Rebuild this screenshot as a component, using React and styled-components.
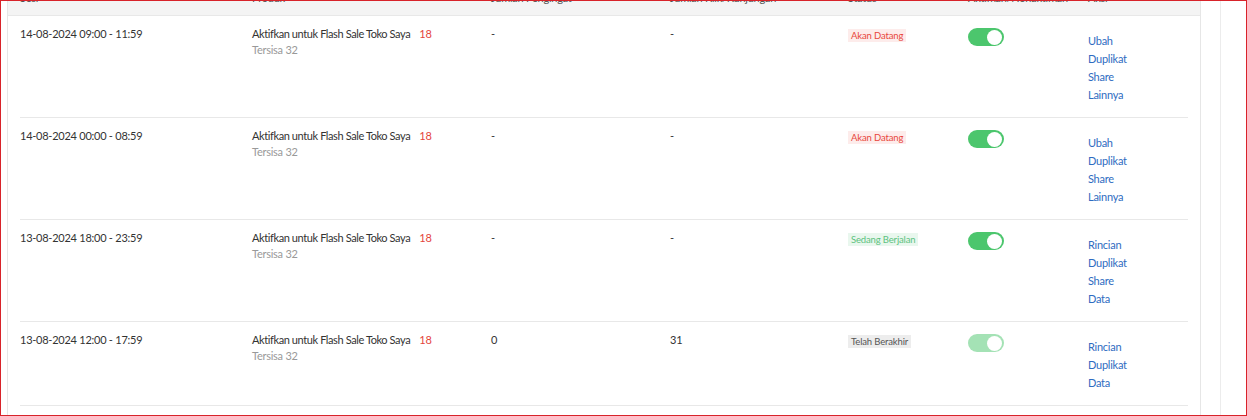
import React from "react";
import styled, { createGlobalStyle } from "styled-components";

const GlobalStyle = createGlobalStyle`
	html, body {
		margin: 0;
		padding: 0;
		background: #fff;
	}
	body {
		font-family: Lato, "Open Sans", sans-serif;
		color: #333;
		letter-spacing: -0.25px;
	}
`;

const columns = ["Sesi", "Produk", "Jumlah Pengingat", "Jumlah Klik/Kunjungan", "Status", "Aktifkan/Nonaktifkan", "Aksi"];

const sessions = [
	{
		time: "14-08-2024 09:00 - 11:59",
		reminder: "-",
		clicks: "-",
		status: "upcoming",
		enabled: true,
		actions: ["Ubah", "Duplikat", "Share", "Lainnya"],
	},
	{
		time: "14-08-2024 00:00 - 08:59",
		reminder: "-",
		clicks: "-",
		status: "upcoming",
		enabled: true,
		actions: ["Ubah", "Duplikat", "Share", "Lainnya"],
	},
	{
		time: "13-08-2024 18:00 - 23:59",
		reminder: "-",
		clicks: "-",
		status: "running",
		enabled: true,
		actions: ["Rincian", "Duplikat", "Share", "Data"],
	},
	{
		time: "13-08-2024 12:00 - 17:59",
		reminder: "0",
		clicks: "31",
		status: "ended",
		enabled: false,
		actions: ["Rincian", "Duplikat", "Data"],
	},
];

const statusLabel = {
	upcoming: "Akan Datang",
	running: "Sedang Berjalan",
	ended: "Telah Berakhir",
};

function App() {
	return (
		<>
			<GlobalStyle />
			<Frame>
				<Card>
					<HeaderRow>
						{columns.map((col) => (
							<HeaderCell key={col}>{col}</HeaderCell>
						))}
					</HeaderRow>

					{sessions.map((item, id) => {
						const { time, reminder, clicks, status, enabled, actions } = item;

						return (
							<Row key={id}>
								<Cell>{time}</Cell>
								<Cell>
									<div>
										<ProductName>Aktifkan untuk Flash Sale Toko Saya</ProductName>
										<Count>18</Count>
									</div>
									<Stock>Tersisa 32</Stock>
								</Cell>
								<Cell>{reminder}</Cell>
								<Cell>{clicks}</Cell>
								<Cell>
									<Badge $status={status}>{statusLabel[status]}</Badge>
								</Cell>
								<Cell>
									<Toggle $dim={!enabled}>
										<Knob />
									</Toggle>
								</Cell>
								<Actions>
									{actions.map((a) => (
										<ActionLink key={a}>{a}</ActionLink>
									))}
								</Actions>
							</Row>
						);
					})}
				</Card>
				<Gutter>
					<Track />
				</Gutter>
			</Frame>
		</>
	);
}

export default App;

const grid = "232px 239px 179px 178px 120px 120px 1fr";

const Frame = styled.div`
	width: 1247px;
	height: 416px;
	box-sizing: border-box;
	border: 1px solid #d8232a;
	display: flex;
	overflow: hidden;
	background: #fff;
`;

const Card = styled.div`
	width: 1194px;
	margin-left: 6px;
	box-sizing: border-box;
	border-left: 1px solid #e6e6e6;
	border-right: 1px solid #e6e6e6;
	flex-shrink: 0;
`;

/* the table is scrolled: only the bottom of the header labels shows */
const HeaderRow = styled.div`
	display: grid;
	grid-template-columns: ${grid};
	grid-template-rows: 14px;
	height: 14px;
	padding: 0 12px;
	background: #f4f4f4;
	border-bottom: 1px solid #e8e8e8;
	overflow: hidden;
`;

const HeaderCell = styled.div`
	margin-top: -10px;
	font-size: 11px;
	line-height: 14px;
	color: #555;
	white-space: nowrap;
`;

const Row = styled.div`
	display: grid;
	grid-template-columns: ${grid};
	margin: 0 12px;
	padding: 9px 0 13px;
	border-bottom: 1px solid #e8e8e8;
`;

const Cell = styled.div`
	font-size: 11px;
	line-height: 18px;
	color: #333;
`;

const ProductName = styled.span`
	letter-spacing: -0.4px;
`;

const Count = styled.span`
	margin-left: 9px;
	color: #e4443c;
`;

const Stock = styled.div`
	color: #999;
	font-size: 11px;
	line-height: 14px;
`;

const badgeColors = {
	upcoming: { fg: "#e8473b", bg: "#fdeceb" },
	running: { fg: "#5cc27e", bg: "#e9f7ee" },
	ended: { fg: "#555", bg: "#ededed" },
};

const Badge = styled.span`
	display: inline-block;
	margin-top: 4px;
	padding: 0 3px;
	font-size: 9.5px;
	line-height: 13px;
	letter-spacing: -0.15px;
	color: ${(p) => badgeColors[p.$status].fg};
	background: ${(p) => badgeColors[p.$status].bg};
`;

const Toggle = styled.div`
	width: 36px;
	height: 18px;
	margin-top: 3px;
	border-radius: 9px;
	background: #4cc66d;
	opacity: ${(p) => (p.$dim ? 0.5 : 1)};
	display: flex;
	align-items: center;
	justify-content: flex-end;
	padding: 0 2px;
	box-sizing: border-box;
`;

const Knob = styled.span`
	width: 15px;
	height: 15px;
	border-radius: 50%;
	background: #fff;
`;

const Actions = styled.div`
	display: flex;
	flex-direction: column;
	margin-top: 7px;
`;

const ActionLink = styled.a`
	font-size: 11px;
	line-height: 18px;
	color: #2f6cc1;
	cursor: pointer;
`;

const Gutter = styled.div`
	flex: 1;
	padding-left: 19px;
	display: flex;
`;

const Track = styled.div`
	flex: 1;
	border-left: 1px solid #ececec;
`;
